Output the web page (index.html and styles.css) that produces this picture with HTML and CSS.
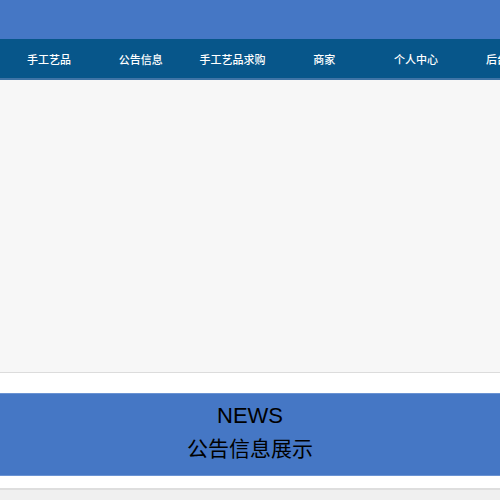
FILE: index.html
```html
<!DOCTYPE html>
<html lang="zh-CN">
<head>
  <meta charset="UTF-8" />
  <title>手工艺品</title>
  <link rel="stylesheet" href="styles.css">
</head>
<body>
  <div class="top-bar"></div>

  <div class="nav">
    <a class="nav-item" href="#">手工艺品</a>
    <a class="nav-item" href="#">公告信息</a>
    <a class="nav-item" href="#">手工艺品求购</a>
    <a class="nav-item" href="#">商家</a>
    <a class="nav-item" href="#">个人中心</a>
    <a class="nav-item" href="#">后台管理</a>
  </div>

  <div class="banner"></div>

  <div class="news-section">
    <div class="news-title">
      <div class="en">NEWS</div>
      <div class="cn">公告信息展示</div>
    </div>
  </div>

  <div class="news-list"></div>
</body>
</html>
```

FILE: styles.css
```css
body {
  margin: 0;
  font-family: "Noto Sans", "Noto Sans CJK SC", sans-serif;
  background-color: #fff;
  overflow: hidden;
}
.top-bar {
  height: 39px;
  background-color: #4577c5;
}
.nav {
  display: flex;
  height: 39px;
  padding-left: 3px;
  background-color: #07568a;
  border-bottom: 2px solid #3f74a6;
  white-space: nowrap;
  overflow: hidden;
}
.nav-item {
  flex: 0 0 91.8px;
  display: flex;
  align-items: center;
  justify-content: center;
  color: #fff;
  font-size: 11px;
  font-weight: 500;
  text-decoration: none;
}
.banner {
  height: 292px;
  background-color: #f7f7f7;
  border-bottom: 1px solid #dcdcdc;
}
.news-section {
  padding: 20px 0 12px;
  border-bottom: 2px solid #dedede;
}
.news-title {
  height: 75px;
  padding-top: 6px;
  background-color: #4577c5;
  border-top: 1px solid #6a93d3;
  border-bottom: 1px solid #6a93d3;
  display: flex;
  flex-direction: column;
  align-items: center;
  color: #000;
}
.en {
  font-family: "Liberation Sans", "Noto Sans CJK SC", sans-serif;
  font-size: 22px;
  line-height: 32px;
}
.cn {
  font-size: 21px;
  line-height: 32px;
}
.news-list {
  height: 20px;
  background-color: #f0f0f0;
}
```
